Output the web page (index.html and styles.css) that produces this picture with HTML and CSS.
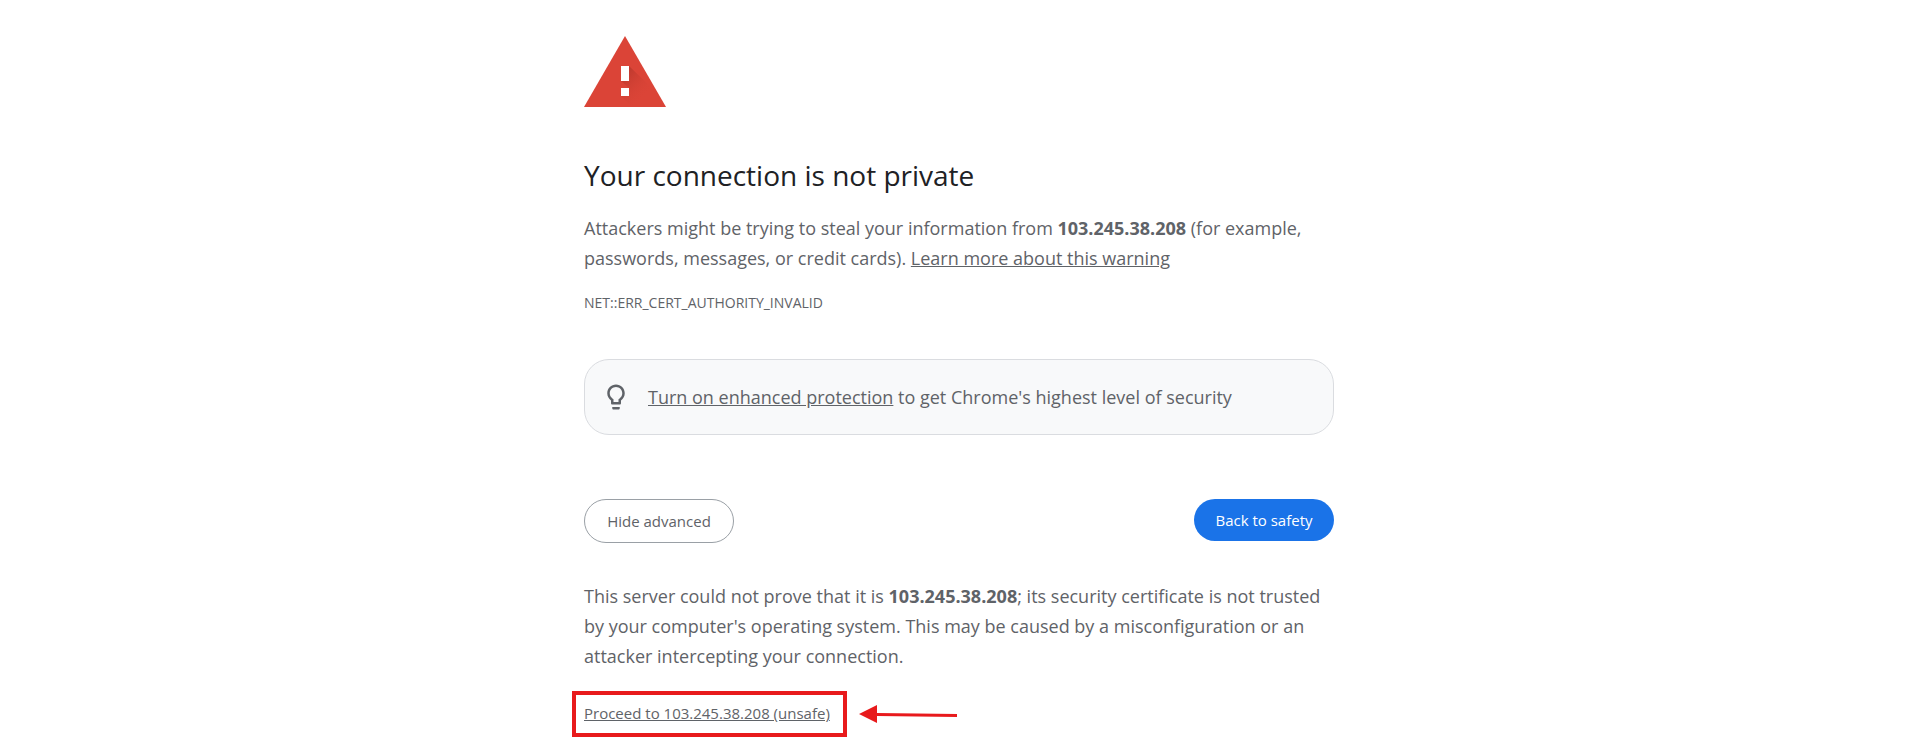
FILE: index.html
```html
<!doctype html>
<html lang="en">
<head>
    <meta charset="utf-8" />
    <meta name="viewport" content="width=device-width, initial-scale=1">
    <title>Privacy error</title>
    <link rel="stylesheet" href="styles.css">
</head>
<body>
<main class="interstitial">
    <svg class="warning-icon" viewBox="0 0 82 71" aria-hidden="true">
        <defs>
            <linearGradient id="shadow" gradientUnits="userSpaceOnUse" x1="41" y1="35" x2="64" y2="58">
                <stop offset="0" stop-color="#b5362b" stop-opacity=".8"/>
                <stop offset="1" stop-color="#db4437" stop-opacity="0"/>
            </linearGradient>
        </defs>
        <path fill="#db4437" d="M41 0l41 71H0z"/>
        <path fill="url(#shadow)" d="M45 30l28 27 8 14H48L37 60h8v-8l-8-7z"/>
        <path fill="#fff" d="M37 30h8v15h-8zM37 52h8v8h-8z"/>
    </svg>

    <h1>Your connection is not private</h1>
    <p>Attackers might be trying to steal your information from <strong>103.245.38.208</strong> (for example, passwords, messages, or credit cards). <a href="#">Learn more about this warning</a></p>
    <div class="error-code">NET::ERR_CERT_AUTHORITY_INVALID</div>

    <div class="enhanced">
        <svg class="enhanced__icon" viewBox="0 0 24 24" aria-hidden="true">
            <path fill="#5f6368" d="M9 21c0 .55.45 1 1 1h4c.55 0 1-.45 1-1v-1H9v1zm3-19C8.14 2 5 5.14 5 9c0 2.38 1.19 4.47 3 5.74V17c0 .55.45 1 1 1h6c.55 0 1-.45 1-1v-2.26c1.81-1.27 3-3.36 3-5.74 0-3.86-3.14-7-7-7zm2.85 11.1l-.85.6V16h-4v-2.3l-.85-.6C7.8 12.16 7 10.63 7 9c0-2.76 2.24-5 5-5s5 2.24 5 5c0 1.63-.8 3.16-2.15 4.1z"/>
        </svg>
        <p><a href="#">Turn on enhanced protection</a> to get Chrome's highest level of security</p>
    </div>

    <div class="buttons">
        <button class="btn btn--secondary" id="details-button">Hide advanced</button>
        <button class="btn btn--primary">Back to safety</button>
    </div>

    <div class="details" id="details">
        <p>This server could not prove that it is <strong>103.245.38.208</strong>; its security certificate is not trusted by your computer's operating system. This may be caused by a misconfiguration or an attacker intercepting your connection.</p>
        <div class="proceed">
            <span class="proceed__mark"><a href="#">Proceed to 103.245.38.208 (unsafe)</a></span>
            <svg class="proceed__arrow" viewBox="0 0 98 18" aria-hidden="true">
                <path fill="#e81a1c" d="M0 9L18 0v8l80 1v3l-80-1v7z"/>
            </svg>
        </div>
    </div>
</main>

<script>
    var button = document.getElementById('details-button');
    var details = document.getElementById('details');
    button.addEventListener('click', function () {
        details.hidden = !details.hidden;
        button.textContent = details.hidden ? 'Advanced' : 'Hide advanced';
    });
</script>
</body>
</html>
```
FILE: styles.css
```css
body {
    margin: 0;
    background-color: #fff;
    color: #5f6368;
    font-family: "Segoe UI", "Open Sans", "Noto Sans", sans-serif;
    font-size: 18px;
    line-height: 30px;
}
.interstitial {
    box-sizing: border-box;
    max-width: 750px;
    margin: 0 auto;
    padding-top: 36px;
}
.warning-icon {
    display: block;
    width: 82px;
    height: 71px;
}
h1 {
    margin: 50px 0 20px;
    color: #202124;
    font-size: 28px;
    font-weight: 400;
    line-height: 36px;
}
p {
    margin: 0;
}
a {
    color: inherit;
}
.error-code {
    margin-top: 18px;
    font-size: 14px;
    line-height: 24px;
}
.enhanced {
    display: flex;
    align-items: center;
    gap: 17px;
    margin-top: 44px;
    padding: 22px 16px;
    border: 1px solid #dadce0;
    border-radius: 25px;
    background-color: #f8f9fa;
}
.enhanced__icon {
    flex: none;
    width: 30px;
    height: 30px;
}
.buttons {
    display: flex;
    justify-content: space-between;
    align-items: flex-start;
    margin-top: 64px;
}
.btn {
    min-width: 140px;
    padding: 9px 20px;
    border: 0;
    border-radius: 22px;
    font-family: inherit;
    font-size: 15px;
    line-height: 24px;
    cursor: pointer;
}
.btn--primary {
    background-color: #1a73e8;
    color: #fff;
}
.btn--secondary {
    min-width: 150px;
    border: 1px solid #9aa0a6;
    background-color: #fff;
    color: #5f6368;
}
.details {
    margin-top: 38px;
}
.proceed {
    display: flex;
    align-items: center;
    gap: 12px;
    margin: 20px 0 0 -12px;
    font-size: 15px;
    line-height: 24px;
}
.proceed__mark {
    padding: 6px 13px 8px 8px;
    border: 4px solid #e81a1c;
}
.proceed__arrow {
    width: 98px;
    height: 18px;
}
```
